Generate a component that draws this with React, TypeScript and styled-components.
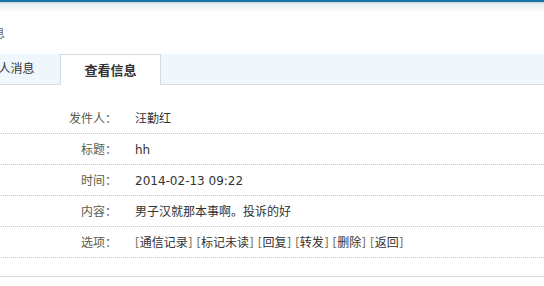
import React from 'react'
import styled, { createGlobalStyle } from 'styled-components'

const GlobalStyle = createGlobalStyle`
  body {
    margin: 0;
    background: #fff;
    font-family: "DejaVu Sans", "Noto Sans CJK SC", sans-serif;
    font-size: 12px;
    color: #333;
    overflow: hidden;
  }
`

interface TabProps {
  readonly active?: boolean
}

// the page is wider than the shot, its left edge sits off-screen
const Page = styled.div`
  margin-left: -48px;
  width: 640px;
`

const TopBar = styled.div`
  height: 2px;
  background: #1a74a5;
`

const Shade = styled.div`
  height: 10px;
  border-top: 1px solid #c9d5dc;
  box-sizing: border-box;
  background: linear-gradient(#e2ebf1, #ffffff);
`

const Crumb = styled.div`
  height: 42px;
  box-sizing: border-box;
  padding: 12px 0 0 5px;
  line-height: 20px;
  color: #666;
`

const TabBar = styled.div`
  display: flex;
  align-items: flex-end;
  height: 30px;
  padding-left: 9px;
  background: #eff6fc;
  border-bottom: 1px solid #d3dde4;
`

const Tab = styled.div<TabProps>`
  width: 99px;
  height: 30px;
  margin-bottom: ${(p) => (p.active ? '-1px' : '0')};
  line-height: 31px;
  text-align: center;
  font-size: ${(p) => (p.active ? '13px' : '12px')};
  font-weight: ${(p) => (p.active ? 700 : 400)};
  color: #333;
  background: ${(p) => (p.active ? '#fff' : 'transparent')};
  border: ${(p) => (p.active ? '1px solid #d0dce5' : '0')};
  border-bottom: 0;
`

const InfoTable = styled.div`
  margin-top: 18px;
`

const Row = styled.div`
  display: grid;
  grid-template-columns: 165px 1fr;
  height: 31px;
  box-sizing: border-box;
  padding-top: 2px;
  line-height: 28px;
  border-bottom: 1px dotted #c4c4c4;
`

const Label = styled.div`
  text-align: right;
  color: #5b5b4c;
`

const Value = styled.div`
  padding-left: 18px;
  color: #333;
  white-space: nowrap;
`

const Option = styled.a`
  color: #333;
  text-decoration: none;
  margin-right: 4px;
  cursor: pointer;

  &::before {
    content: "[";
    color: #7d7d66;
  }
  &::after {
    content: "]";
    color: #7d7d66;
  }
`

const Footer = styled.div`
  margin-top: 18px;
  border-top: 1px solid #d3dde4;
  height: 20px;
`

const rows = [
  { label: '发件人：', value: '汪勤红' },
  { label: '标题：', value: 'hh' },
  { label: '时间：', value: '2014-02-13 09:22' },
  { label: '内容：', value: '男子汉就那本事啊。投诉的好' },
]

const options = ['通信记录', '标记未读', '回复', '转发', '删除', '返回']

const App = () => {
  return (
    <>
      <GlobalStyle />
      <Page>
        <TopBar />
        <Shade />
        <Crumb>查看信息</Crumb>
        <TabBar>
          <Tab>个人消息</Tab>
          <Tab active>查看信息</Tab>
        </TabBar>
        <InfoTable>
          {rows.map((r) => (
            <Row key={r.label}>
              <Label>{r.label}</Label>
              <Value>{r.value}</Value>
            </Row>
          ))}
          <Row>
            <Label>选项：</Label>
            <Value>
              {options.map((o) => (
                <Option key={o}>{o}</Option>
              ))}
            </Value>
          </Row>
        </InfoTable>
        <Footer />
      </Page>
    </>
  )
}

export default App
